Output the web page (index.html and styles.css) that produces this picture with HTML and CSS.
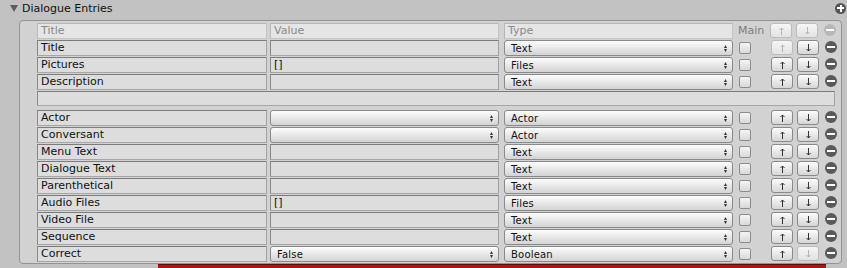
FILE: index.html
```html
<!DOCTYPE html>
<html lang="en">

<head>
    <meta charset="UTF-8" />
    <title>Dialogue Entries</title>
    <link rel="stylesheet" href="styles.css">
</head>

<body>
    <div class="foldout">
        <span class="foldout-arrow"></span>
        <span>Dialogue Entries</span>
        <span class="add"></span>
    </div>

    <div class="panel">
        <!-- column headers -->
        <div class="row">
            <div class="field head c-title">Title</div>
            <div class="field head c-value">Value</div>
            <div class="field head c-type">Type</div>
            <div class="c-main main-label">Main</div>
            <div class="btn off c-up"><svg viewBox="0 0 5 8"><path d="M2.5 1V8M0.5 3L2.5 1L4.5 3" /></svg></div>
            <div class="btn off c-down"><svg viewBox="0 0 5 8"><path d="M2.5 0V7M0.5 5L2.5 7L4.5 5" /></svg></div>
            <div class="remove off c-rm"></div>
        </div>

        <div class="row">
            <div class="field c-title">Title</div>
            <div class="field c-value"></div>
            <div class="popup c-type">Text<svg class="arrows" viewBox="0 0 3 7"><path d="M0 3H3L1.5 0Z M0 4H3L1.5 7Z" /></svg></div>
            <div class="check c-main"></div>
            <div class="btn off c-up"><svg viewBox="0 0 5 8"><path d="M2.5 1V8M0.5 3L2.5 1L4.5 3" /></svg></div>
            <div class="btn c-down"><svg viewBox="0 0 5 8"><path d="M2.5 0V7M0.5 5L2.5 7L4.5 5" /></svg></div>
            <div class="remove c-rm"></div>
        </div>
        <div class="row">
            <div class="field c-title">Pictures</div>
            <div class="field c-value">[]</div>
            <div class="popup c-type">Files<svg class="arrows" viewBox="0 0 3 7"><path d="M0 3H3L1.5 0Z M0 4H3L1.5 7Z" /></svg></div>
            <div class="check c-main"></div>
            <div class="btn c-up"><svg viewBox="0 0 5 8"><path d="M2.5 1V8M0.5 3L2.5 1L4.5 3" /></svg></div>
            <div class="btn c-down"><svg viewBox="0 0 5 8"><path d="M2.5 0V7M0.5 5L2.5 7L4.5 5" /></svg></div>
            <div class="remove c-rm"></div>
        </div>
        <div class="row">
            <div class="field c-title">Description</div>
            <div class="field c-value"></div>
            <div class="popup c-type">Text<svg class="arrows" viewBox="0 0 3 7"><path d="M0 3H3L1.5 0Z M0 4H3L1.5 7Z" /></svg></div>
            <div class="check c-main"></div>
            <div class="btn c-up"><svg viewBox="0 0 5 8"><path d="M2.5 1V8M0.5 3L2.5 1L4.5 3" /></svg></div>
            <div class="btn c-down"><svg viewBox="0 0 5 8"><path d="M2.5 0V7M0.5 5L2.5 7L4.5 5" /></svg></div>
            <div class="remove c-rm"></div>
        </div>

        <div class="field sep"></div>

        <div class="row">
            <div class="field c-title">Actor</div>
            <div class="popup c-value"><svg class="arrows" viewBox="0 0 3 7"><path d="M0 3H3L1.5 0Z M0 4H3L1.5 7Z" /></svg></div>
            <div class="popup c-type">Actor<svg class="arrows" viewBox="0 0 3 7"><path d="M0 3H3L1.5 0Z M0 4H3L1.5 7Z" /></svg></div>
            <div class="check c-main"></div>
            <div class="btn c-up"><svg viewBox="0 0 5 8"><path d="M2.5 1V8M0.5 3L2.5 1L4.5 3" /></svg></div>
            <div class="btn c-down"><svg viewBox="0 0 5 8"><path d="M2.5 0V7M0.5 5L2.5 7L4.5 5" /></svg></div>
            <div class="remove c-rm"></div>
        </div>
        <div class="row">
            <div class="field c-title">Conversant</div>
            <div class="popup c-value"><svg class="arrows" viewBox="0 0 3 7"><path d="M0 3H3L1.5 0Z M0 4H3L1.5 7Z" /></svg></div>
            <div class="popup c-type">Actor<svg class="arrows" viewBox="0 0 3 7"><path d="M0 3H3L1.5 0Z M0 4H3L1.5 7Z" /></svg></div>
            <div class="check c-main"></div>
            <div class="btn c-up"><svg viewBox="0 0 5 8"><path d="M2.5 1V8M0.5 3L2.5 1L4.5 3" /></svg></div>
            <div class="btn c-down"><svg viewBox="0 0 5 8"><path d="M2.5 0V7M0.5 5L2.5 7L4.5 5" /></svg></div>
            <div class="remove c-rm"></div>
        </div>
        <div class="row">
            <div class="field c-title">Menu Text</div>
            <div class="field c-value"></div>
            <div class="popup c-type">Text<svg class="arrows" viewBox="0 0 3 7"><path d="M0 3H3L1.5 0Z M0 4H3L1.5 7Z" /></svg></div>
            <div class="check c-main"></div>
            <div class="btn c-up"><svg viewBox="0 0 5 8"><path d="M2.5 1V8M0.5 3L2.5 1L4.5 3" /></svg></div>
            <div class="btn c-down"><svg viewBox="0 0 5 8"><path d="M2.5 0V7M0.5 5L2.5 7L4.5 5" /></svg></div>
            <div class="remove c-rm"></div>
        </div>
        <div class="row">
            <div class="field c-title">Dialogue Text</div>
            <div class="field c-value"></div>
            <div class="popup c-type">Text<svg class="arrows" viewBox="0 0 3 7"><path d="M0 3H3L1.5 0Z M0 4H3L1.5 7Z" /></svg></div>
            <div class="check c-main"></div>
            <div class="btn c-up"><svg viewBox="0 0 5 8"><path d="M2.5 1V8M0.5 3L2.5 1L4.5 3" /></svg></div>
            <div class="btn c-down"><svg viewBox="0 0 5 8"><path d="M2.5 0V7M0.5 5L2.5 7L4.5 5" /></svg></div>
            <div class="remove c-rm"></div>
        </div>
        <div class="row">
            <div class="field c-title">Parenthetical</div>
            <div class="field c-value"></div>
            <div class="popup c-type">Text<svg class="arrows" viewBox="0 0 3 7"><path d="M0 3H3L1.5 0Z M0 4H3L1.5 7Z" /></svg></div>
            <div class="check c-main"></div>
            <div class="btn c-up"><svg viewBox="0 0 5 8"><path d="M2.5 1V8M0.5 3L2.5 1L4.5 3" /></svg></div>
            <div class="btn c-down"><svg viewBox="0 0 5 8"><path d="M2.5 0V7M0.5 5L2.5 7L4.5 5" /></svg></div>
            <div class="remove c-rm"></div>
        </div>
        <div class="row">
            <div class="field c-title">Audio Files</div>
            <div class="field c-value">[]</div>
            <div class="popup c-type">Files<svg class="arrows" viewBox="0 0 3 7"><path d="M0 3H3L1.5 0Z M0 4H3L1.5 7Z" /></svg></div>
            <div class="check c-main"></div>
            <div class="btn c-up"><svg viewBox="0 0 5 8"><path d="M2.5 1V8M0.5 3L2.5 1L4.5 3" /></svg></div>
            <div class="btn c-down"><svg viewBox="0 0 5 8"><path d="M2.5 0V7M0.5 5L2.5 7L4.5 5" /></svg></div>
            <div class="remove c-rm"></div>
        </div>
        <div class="row">
            <div class="field c-title">Video File</div>
            <div class="field c-value"></div>
            <div class="popup c-type">Text<svg class="arrows" viewBox="0 0 3 7"><path d="M0 3H3L1.5 0Z M0 4H3L1.5 7Z" /></svg></div>
            <div class="check c-main"></div>
            <div class="btn c-up"><svg viewBox="0 0 5 8"><path d="M2.5 1V8M0.5 3L2.5 1L4.5 3" /></svg></div>
            <div class="btn c-down"><svg viewBox="0 0 5 8"><path d="M2.5 0V7M0.5 5L2.5 7L4.5 5" /></svg></div>
            <div class="remove c-rm"></div>
        </div>
        <div class="row">
            <div class="field c-title">Sequence</div>
            <div class="field c-value"></div>
            <div class="popup c-type">Text<svg class="arrows" viewBox="0 0 3 7"><path d="M0 3H3L1.5 0Z M0 4H3L1.5 7Z" /></svg></div>
            <div class="check c-main"></div>
            <div class="btn c-up"><svg viewBox="0 0 5 8"><path d="M2.5 1V8M0.5 3L2.5 1L4.5 3" /></svg></div>
            <div class="btn c-down"><svg viewBox="0 0 5 8"><path d="M2.5 0V7M0.5 5L2.5 7L4.5 5" /></svg></div>
            <div class="remove c-rm"></div>
        </div>
        <div class="row">
            <div class="field c-title">Correct</div>
            <div class="popup c-value">False<svg class="arrows" viewBox="0 0 3 7"><path d="M0 3H3L1.5 0Z M0 4H3L1.5 7Z" /></svg></div>
            <div class="popup c-type">Boolean<svg class="arrows" viewBox="0 0 3 7"><path d="M0 3H3L1.5 0Z M0 4H3L1.5 7Z" /></svg></div>
            <div class="check c-main"></div>
            <div class="btn c-up"><svg viewBox="0 0 5 8"><path d="M2.5 1V8M0.5 3L2.5 1L4.5 3" /></svg></div>
            <div class="btn off c-down"><svg viewBox="0 0 5 8"><path d="M2.5 0V7M0.5 5L2.5 7L4.5 5" /></svg></div>
            <div class="remove c-rm"></div>
        </div>
    </div>

    <div class="redbar"></div>
</body>

</html>
```

FILE: styles.css
```css
body {
    margin: 0;
    width: 847px;
    height: 268px;
    overflow: hidden;
    background-color: #c2c2c2;
    font-family: "DejaVu Sans", sans-serif;
    font-size: 11px;
    color: #111;
}

/* foldout header */
.foldout {
    display: flex;
    align-items: center;
    height: 16px;
    padding-left: 10px;
}

.foldout-arrow {
    width: 0;
    height: 0;
    border-left: 4px solid transparent;
    border-right: 4px solid transparent;
    border-top: 7px solid #5e5e5e;
    margin-right: 4px;
}

.add {
    margin-left: auto;
    margin-right: 1px;
    width: 11px;
    height: 11px;
    border-radius: 50%;
    background-color: #555;
    position: relative;
}

.add::before,
.add::after {
    content: "";
    position: absolute;
    background-color: #fff;
    left: 2px;
    top: 4.5px;
    width: 7px;
    height: 2px;
}

.add::after {
    left: 4.5px;
    top: 2px;
    width: 2px;
    height: 7px;
}

/* box */
.panel {
    box-sizing: border-box;
    margin: 4px 0 0 19px;
    width: 823px;
    height: 244px;
    padding: 2px 0 0 17px;
    border: 1px solid #939393;
    border-radius: 4px;
    background-color: #d2d2d2;
}

.row {
    display: flex;
    height: 16px;
    margin-bottom: 1px;
}

.c-title { width: 230px; }
.c-value { width: 229px; margin-left: 3px; }
.c-type { width: 229px; margin-left: 5px; }
.c-main { width: 12px; margin-left: 6px; flex: none; }
.c-up { margin-left: 20px; }
.c-down { margin-left: 4px; }
.c-rm { margin-left: 6px; }

.field {
    box-sizing: border-box;
    height: 16px;
    padding: 0 3px;
    line-height: 14px;
    white-space: nowrap;
    overflow: hidden;
    background-color: #dddddd;
    border: 1px solid;
    border-color: #7c7c7c #a2a2a2 #a6a6a6 #888;
}

.field.head {
    background-color: #e5e5e5;
    border-color: #b6b6b6 #c4c4c4 #c6c6c6 #b8b8b8;
    color: #8a8a8a;
}

.sep {
    width: 798px;
    height: 15px;
    margin-bottom: 4px;
}

.popup {
    box-sizing: border-box;
    height: 16px;
    display: flex;
    align-items: center;
    padding: 0 5px 0 6px;
    font-size: 10px;
    letter-spacing: 0.2px;
    border: 1px solid #8a8a8a;
    border-radius: 3px;
    background: linear-gradient(#fcfcfc, #d4d4d4);
}

.arrows {
    margin-left: auto;
    width: 3px;
    height: 7px;
    fill: #333;
}

.main-label {
    color: #7e7e7e;
    line-height: 16px;
    overflow: visible;
    white-space: nowrap;
    margin-left: 5px;
}

.check {
    box-sizing: border-box;
    height: 12px;
    margin-top: 2px;
    border: 1px solid #8c8c8c;
    border-radius: 2px;
    background: linear-gradient(#f5f5f5, #d8d8d8);
}

.btn {
    box-sizing: border-box;
    width: 22px;
    height: 15px;
    display: flex;
    align-items: center;
    justify-content: center;
    border: 1px solid #8a8a8a;
    border-radius: 3px;
    background: linear-gradient(#fcfcfc, #d6d6d6);
}

.btn svg {
    width: 5px;
    height: 8px;
    fill: none;
    stroke: #333;
    stroke-width: 1;
}

.btn.off {
    border-color: #bcbcbc;
    background: linear-gradient(#f6f6f6, #e3e3e3);
}

.btn.off svg {
    stroke: #b4b4b4;
}

.remove {
    width: 12px;
    height: 12px;
    margin-top: 1px;
    border-radius: 50%;
    background-color: #5a5a5a;
    position: relative;
}

.remove::after {
    content: "";
    position: absolute;
    left: 2px;
    top: 5px;
    width: 8px;
    height: 2px;
    background-color: #fff;
}

.remove.off {
    background-color: #b8b8b8;
}

.redbar {
    margin-left: 158px;
    width: 668px;
    height: 3px;
    border-top: 1px solid #5c0c0c;
    background-color: #b01414;
}
```
